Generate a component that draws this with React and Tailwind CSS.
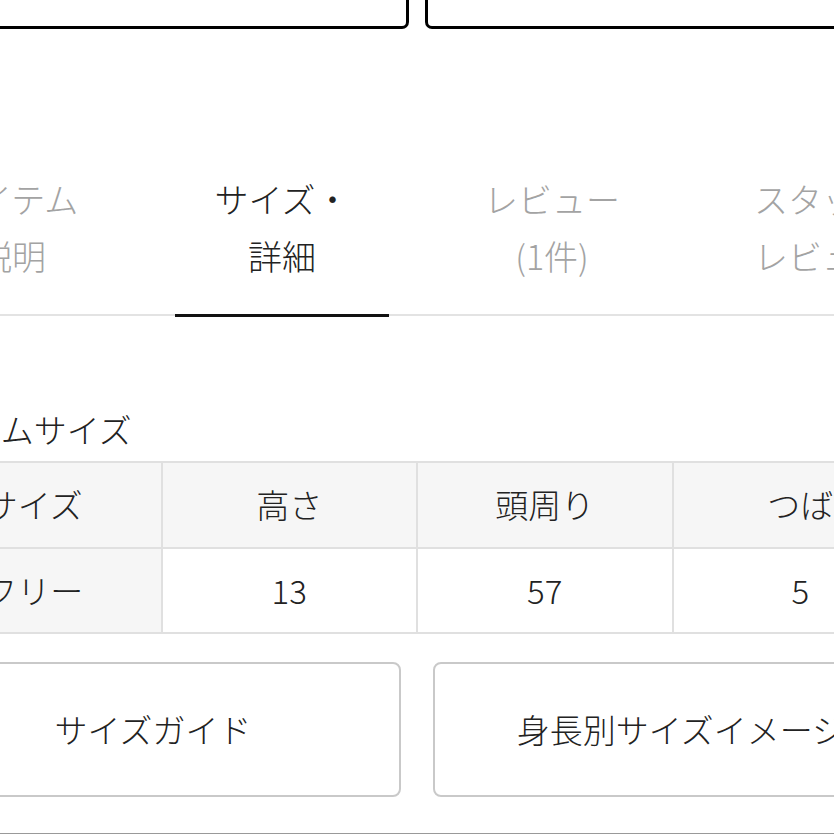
export default function App() {
  const font = { fontFamily: '"Noto Sans CJK JP", "Noto Sans", sans-serif' };
  const tabs = [
    ["アイテム", "説明"],
    ["サイズ・", "詳細"],
    ["レビュー", "(1件)"],
    ["スタッフ", "レビュー"],
  ];
  const head = ["サイズ", "高さ", "頭周り", "つば"];
  const body = ["フリー", "13", "57", "5"];
  return (
    <div
      className="w-[834px] h-[834px] overflow-hidden bg-white text-[#222] font-light flex flex-col items-center"
      style={font}
    >
      {/* top boxes */}
      <div className="w-[1024px] shrink-0 h-[29px] overflow-hidden flex items-end gap-[16px]">
        <div className="flex-1 h-[80px] border-[3px] border-black rounded-[7px]" />
        <div className="flex-1 h-[80px] border-[3px] border-black rounded-[7px]" />
      </div>

      {/* tabs */}
      <div className="w-[1080px] shrink-0 mt-[141px] flex border-b-2 border-[#e3e3e3]">
        {tabs.map((t, i) => (
          <div key={i} className="w-[270px] px-[28px]">
            <div
              className={
                "pb-[30px] border-b-[3px] -mb-[3px] text-center text-[34px] leading-[57px] " +
                (i === 1 ? "border-[#111] text-[#222]" : "border-transparent text-[#a3a3a3]")
              }
            >
              <div className="whitespace-nowrap">{t[0]}</div>
              <div className="whitespace-nowrap">{t[1]}</div>
            </div>
          </div>
        ))}
      </div>

      {/* title */}
      <div className="w-[1024px] shrink-0 mt-[89px] text-[33px] leading-[48px]">
        アイテムサイズ
      </div>

      {/* table */}
      <div className="w-[1024px] shrink-0 mt-[8px] grid grid-cols-4 border-t-2 border-l-2 border-[#e0e0e0] text-[33px]">
        {head.map((h, i) => (
          <div
            key={"h" + i}
            className="h-[86px] border-r-2 border-b-2 border-[#e0e0e0] bg-[#f6f6f6] flex items-center justify-center"
          >
            {h}
          </div>
        ))}
        {body.map((b, i) => (
          <div
            key={"b" + i}
            className={
              "h-[85px] border-r-2 border-b-2 border-[#e0e0e0] flex items-center justify-center " +
              (i === 0 ? "bg-[#f6f6f6]" : "bg-white")
            }
          >
            {b}
          </div>
        ))}
      </div>

      {/* buttons */}
      <div className="w-[1024px] shrink-0 mt-[28px] flex gap-[32px]">
        <div className="flex-1 h-[135px] border-2 border-[#c9c9c9] rounded-[8px] flex items-center justify-center text-[33px] whitespace-nowrap">
          サイズガイド
        </div>
        <div className="flex-1 h-[135px] border-2 border-[#c9c9c9] rounded-[8px] flex items-center justify-center text-[33px] whitespace-nowrap">
          身長別サイズイメージ
        </div>
      </div>

      {/* bottom line */}
      <div className="w-[1024px] shrink-0 mt-[36px] border-t-2 border-[#999]" />
    </div>
  );
}
